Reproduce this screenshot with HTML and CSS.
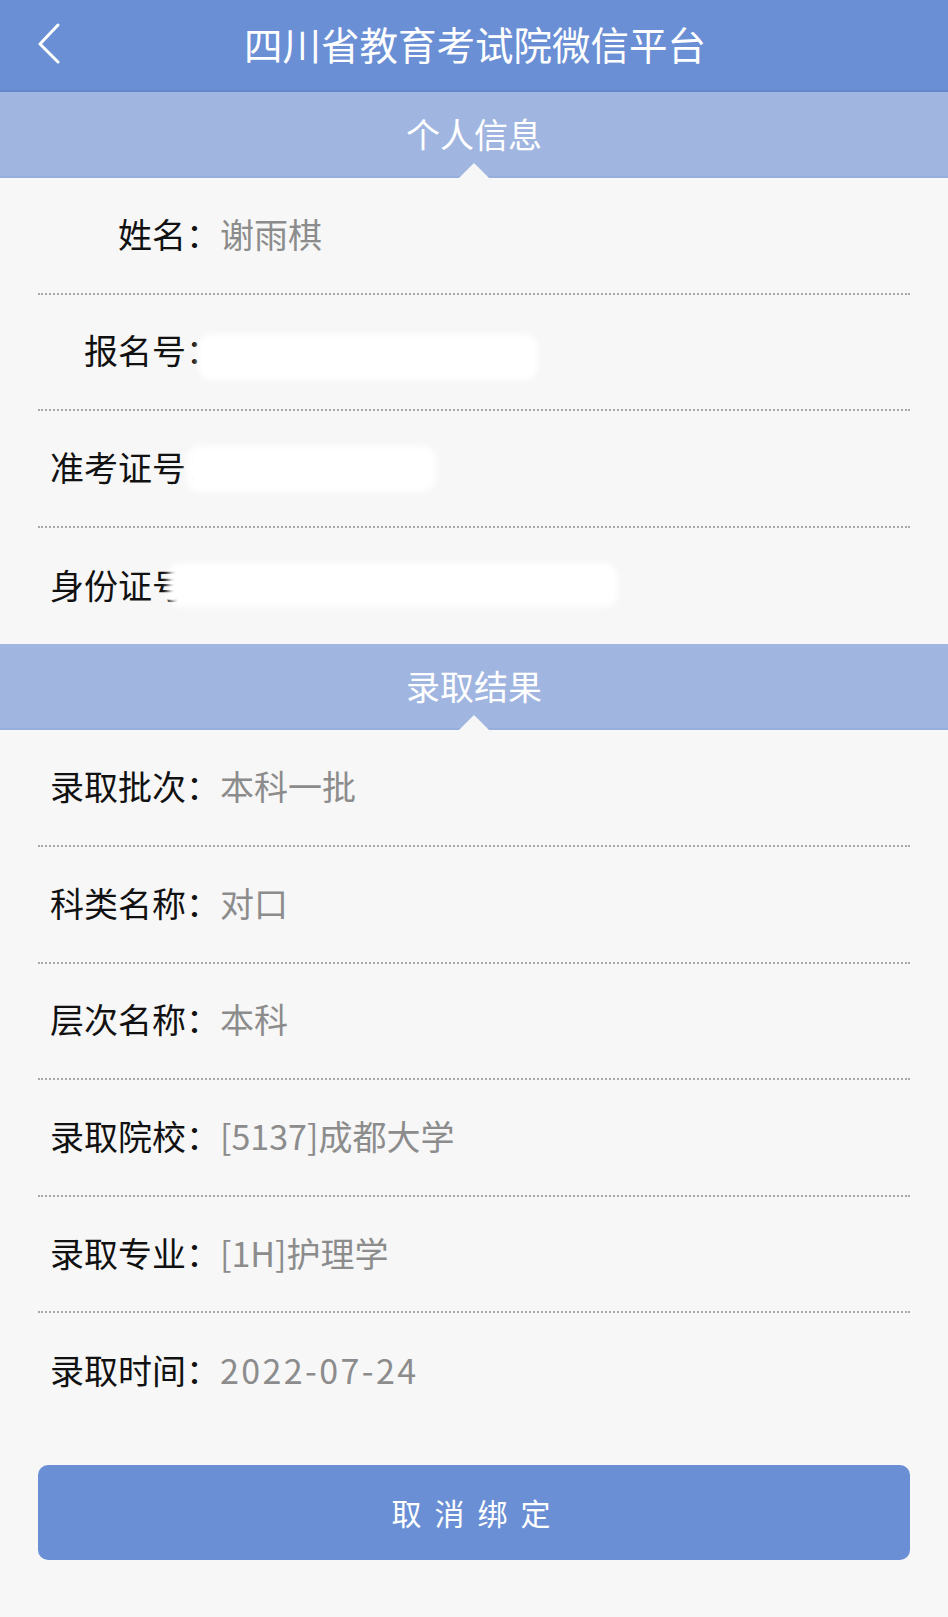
FILE: index.html
```html
<!DOCTYPE html>
<html lang="zh-CN">
<head>
<meta charset="utf-8">
<title>四川省教育考试院微信平台</title>
<link rel="stylesheet" href="styles.css">
</head>
<body>
<div class="page">
  <header class="topbar">
    <svg class="back" width="30" height="42" viewBox="0 0 30 42"><polyline points="24,3 6,22 24,40" fill="none" stroke="#ffffff" stroke-width="3" stroke-linecap="round" stroke-linejoin="round"/></svg>
    <h1 class="title">四川省教育考试院微信平台</h1>
  </header>

  <div class="band"><span>个人信息</span></div>
  <ul class="rows">
    <li class="row"><span class="label">姓名：</span><span class="value">谢雨棋</span></li>
    <li class="row"><span class="label">报名号：</span><span class="value"><span class="blot b1"></span></span></li>
    <li class="row"><span class="label">准考证号：</span><span class="value"><span class="blot b2"></span></span></li>
    <li class="row"><span class="label">身份证号：</span><span class="value"><span class="blot b3"></span></span></li>
  </ul>

  <div class="band"><span>录取结果</span></div>
  <ul class="rows">
    <li class="row"><span class="label">录取批次：</span><span class="value">本科一批</span></li>
    <li class="row"><span class="label">科类名称：</span><span class="value">对口</span></li>
    <li class="row"><span class="label">层次名称：</span><span class="value">本科</span></li>
    <li class="row"><span class="label">录取院校：</span><span class="value">[5137]成都大学</span></li>
    <li class="row"><span class="label">录取专业：</span><span class="value">[1H]护理学</span></li>
    <li class="row"><span class="label">录取时间：</span><span class="value date">2022-07-24</span></li>
  </ul>

  <div class="actions">
    <button class="btn">取消绑定</button>
  </div>
</div>
</body>
</html>
```

FILE: styles.css
```css
* { box-sizing: border-box; }
html, body { margin: 0; padding: 0; }
body {
  background: #f7f7f7;
  font-family: "Noto Sans CJK SC", "Noto Sans", sans-serif;
  color: #111;
}
.page { width: 948px; min-height: 1617px; background: #f7f7f7; }

.topbar {
  position: relative;
  height: 92px;
  background: #6a8fd5;
  display: flex;
  align-items: center;
  justify-content: center;
  border-bottom: 2px solid #6487cc;
}
.back { position: absolute; left: 34px; top: 22px; }
.title {
  margin: 0;
  font-size: 38.5px;
  font-weight: 400;
  color: #fff;
  padding-left: 2px;
  margin-top: -4px;
}

.band {
  position: relative;
  height: 86px;
  background: #a0b6e0;
  display: flex;
  align-items: center;
  justify-content: center;
  border-bottom: 2px solid #97afdc;
}
.band span {
  font-size: 34px;
  color: #fff;
  margin-bottom: 2px;
}
.band::after {
  content: "";
  position: absolute;
  left: 459px;
  bottom: -2px;
  border-left: 15px solid transparent;
  border-right: 15px solid transparent;
  border-bottom: 15px solid #f7f7f7;
}

.rows { list-style: none; margin: 0; padding: 0 38px; }
.row {
  height: 116.6px;
  display: flex;
  align-items: center;
  border-bottom: 2px dotted #a8a8a8;
  padding-bottom: 4px;
}
.row:last-child { border-bottom: none; }
.label {
  width: 182px;
  text-align: right;
  font-size: 34px;
  flex-shrink: 0;
}
.value {
  font-size: 34px;
  color: #8c8c8c;
  display: flex;
  align-items: center;
}
.date { letter-spacing: 2.4px; }
.blot {
  display: inline-block;
  background: #ffffff;
  filter: blur(3px);
  border-radius: 14px;
}
.b1 { width: 340px; height: 46px; margin-left: -22px; margin-top: 14px; }
.b2 { width: 250px; height: 46px; margin-left: -34px; margin-top: 6px; }
.b3 { width: 450px; height: 44px; margin-left: -52px; margin-top: 2px; }

.actions { padding: 35px 38px 0; }
.btn {
  width: 100%;
  height: 95px;
  background: #6a8fd5;
  border: none;
  border-radius: 10px;
  color: #fff;
  font-family: "Noto Sans CJK SC", sans-serif;
  font-size: 30px;
  letter-spacing: 13px;
  padding-left: 13px;
}
```
